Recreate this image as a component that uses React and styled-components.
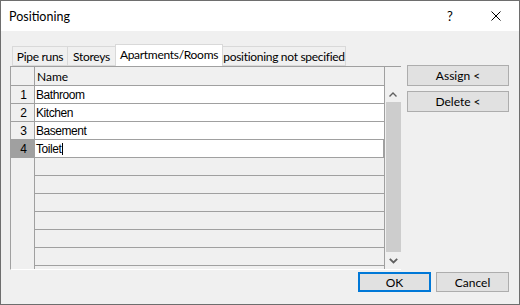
import React from "react";
import styled, { createGlobalStyle } from "styled-components";

const GlobalStyle = createGlobalStyle`
  html, body { margin: 0; padding: 0; background: #ffffff; }
  body { font-family: Lato, "Noto Sans", sans-serif; }
  * { box-sizing: border-box; }
`;

const UI_FONT = `Lato, "Noto Sans", sans-serif`;
const GRID_FONT = `"Liberation Sans", Arial, sans-serif`;
const LINE = "#a0a0a0";

const Dialog = styled.div`
  width: 520px;
  height: 305px;
  border: 1px solid #6e6e6e;
  background: #f0f0f0;
  display: flex;
  flex-direction: column;
  overflow: hidden;
`;

const TitleBar = styled.div`
  height: 30px;
  flex: none;
  background: #ffffff;
  display: flex;
  align-items: center;
  padding-left: 8px;
  font-family: ${UI_FONT};
  font-size: 12.5px;
  color: #000;
`;

const TitleText = styled.div`
  flex: 1;
`;

const TitleButton = styled.div`
  width: 46px;
  height: 30px;
  display: flex;
  align-items: center;
  justify-content: center;
  font-size: 13px;
  color: #000;
`;

const Body = styled.div`
  flex: 1;
  display: flex;
  flex-direction: column;
  padding: 13px 10px 0 9px;
`;

const Main = styled.div`
  display: flex;
  gap: 5px;
  height: 226px;
`;

const LeftPane = styled.div`
  width: 392px;
  display: flex;
  flex-direction: column;
`;

const TabStrip = styled.div`
  height: 22px;
  display: flex;
  align-items: flex-end;
  padding-left: 2px;
`;

const Tab = styled.div`
  position: relative;
  width: ${(p) => p.$w}px;
  height: ${(p) => (p.$active ? 22 : 20)}px;
  margin-left: ${(p) => (p.$first ? 0 : -1)}px;
  border: 1px solid #d9d9d9;
  border-bottom: ${(p) => (p.$active ? "none" : "1px solid #d9d9d9")};
  background: ${(p) => (p.$active ? "#ffffff" : "#f0f0f0")};
  z-index: ${(p) => (p.$active ? 1 : 0)};
  display: flex;
  align-items: center;
  justify-content: center;
  padding-bottom: ${(p) => (p.$active ? 2 : 0)}px;
  font-family: ${UI_FONT};
  font-size: 12px;
  letter-spacing: -0.3px;
  color: #000;
  white-space: nowrap;
  overflow: hidden;
`;

const Grid = styled.div`
  width: 391px;
  height: 204px;
  border-top: 1px solid ${LINE};
  border-left: 1px solid ${LINE};
  border-bottom: 1px solid #ffffff;
  background: #f0f0f0;
  display: flex;
  flex-direction: column;
  font-family: ${GRID_FONT};
  color: #000;
`;

const HeaderRow = styled.div`
  display: flex;
  height: 19px;
  flex: none;
`;

const NumHead = styled.div`
  width: 24px;
  border-right: 1px solid ${LINE};
  border-bottom: 1px solid ${LINE};
`;

const NameHead = styled.div`
  width: 350px;
  border-right: 1px solid ${LINE};
  border-bottom: 1px solid ${LINE};
  display: flex;
  align-items: center;
  padding-left: 2px;
  font-family: ${UI_FONT};
  font-size: 12px;
`;

const Corner = styled.div`
  width: 16px;
`;

const GridBody = styled.div`
  flex: 1;
  display: flex;
  overflow: hidden;
`;

const Rows = styled.div`
  width: 374px;
  display: flex;
  flex-direction: column;
  overflow: hidden;
`;

const Row = styled.div`
  display: flex;
  height: 18px;
  flex: none;
`;

const NumCell = styled.div`
  width: 24px;
  border-right: 1px solid ${LINE};
  border-bottom: ${(p) => (p.$filled ? `1px solid ${LINE}` : "none")};
  background: ${(p) => (p.$current ? "#a0a0a0" : "#f0f0f0")};
  display: flex;
  align-items: center;
  justify-content: flex-end;
  padding-right: 7px;
  font-size: 12px;
`;

const NameCell = styled.div`
  width: 350px;
  border-right: 1px solid ${LINE};
  border-bottom: 1px solid ${LINE};
  background: ${(p) => (p.$filled ? "#ffffff" : "transparent")};
  box-shadow: ${(p) => (p.$editing ? `inset -1px 0 0 ${LINE}` : "none")};
  display: flex;
  align-items: center;
  padding-left: 1px;
  white-space: nowrap;
  font-size: 12px;
  letter-spacing: -0.45px;
`;

const Caret = styled.span`
  display: inline-block;
  width: 1px;
  height: 12px;
  background: #000;
  margin-left: 1px;
`;

const Scrollbar = styled.div`
  width: 16px;
  display: flex;
  flex-direction: column;
  background: #f0f0f0;
`;

const ArrowButton = styled.div`
  height: ${(p) => p.$h}px;
  flex: none;
  display: flex;
  align-items: center;
  justify-content: center;
`;

const Thumb = styled.div`
  flex: 1;
  margin-left: 1px;
  background: #cdcdcd;
`;

const ButtonColumn = styled.div`
  width: 102px;
  display: flex;
  flex-direction: column;
  gap: 5px;
  padding-top: 21px;
`;

const Button = styled.button`
  width: ${(p) => p.$w || 102}px;
  height: ${(p) => p.$h || 21}px;
  padding: 0;
  margin: 0;
  background: #e1e1e1;
  border: ${(p) => (p.$default ? "2px solid #0078d7" : "1px solid #adadad")};
  font-family: ${UI_FONT};
  font-size: 12px;
  color: #000;
  display: flex;
  align-items: center;
  justify-content: center;
`;

const Footer = styled.div`
  display: flex;
  justify-content: flex-end;
  gap: 5px;
  margin-top: 2px;
`;

const rows = ["Bathroom", "Kitchen", "Basement", "Toilet"];
const emptyCount = 7;

export default function App() {
  return (
    <>
      <GlobalStyle />
      <Dialog>
        <TitleBar>
          <TitleText>Positioning</TitleText>
          <TitleButton>?</TitleButton>
          <TitleButton>
            <svg width="10" height="10" viewBox="0 0 10 10">
              <path d="M0.5 0.5 L9.5 9.5 M9.5 0.5 L0.5 9.5" stroke="#000" strokeWidth="1" fill="none" />
            </svg>
          </TitleButton>
        </TitleBar>
        <Body>
          <Main>
            <LeftPane>
              <TabStrip>
                <Tab $w={56} $first>Pipe runs</Tab>
                <Tab $w={49}>Storeys</Tab>
                <Tab $w={108} $active>Apartments/Rooms</Tab>
                <Tab $w={124}>positioning not specified</Tab>
              </TabStrip>
              <Grid>
                <HeaderRow>
                  <NumHead />
                  <NameHead>Name</NameHead>
                  <Corner />
                </HeaderRow>
                <GridBody>
                  <Rows>
                    {rows.map((name, i) => (
                      <Row key={name}>
                        <NumCell $filled $current={i === 3}>{i + 1}</NumCell>
                        <NameCell $filled $editing={i === 3}>
                          {name}
                          {i === 3 && <Caret />}
                        </NameCell>
                      </Row>
                    ))}
                    {Array.from({ length: emptyCount }).map((_, i) => (
                      <Row key={"e" + i}>
                        <NumCell />
                        <NameCell />
                      </Row>
                    ))}
                  </Rows>
                  <Scrollbar>
                    <ArrowButton $h={16}>
                      <svg width="8" height="5" viewBox="0 0 8 5">
                        <path d="M0.5 4.5 L4 1 L7.5 4.5" stroke="#606060" strokeWidth="1.4" fill="none" />
                      </svg>
                    </ArrowButton>
                    <Thumb />
                    <ArrowButton $h={17}>
                      <svg width="9" height="6" viewBox="0 0 9 6">
                        <path d="M0.8 0.8 L4.5 4.5 L8.2 0.8" stroke="#606060" strokeWidth="1.8" fill="none" />
                      </svg>
                    </ArrowButton>
                  </Scrollbar>
                </GridBody>
              </Grid>
            </LeftPane>
            <ButtonColumn>
              <Button>Assign &lt;</Button>
              <Button>Delete &lt;</Button>
            </ButtonColumn>
          </Main>
          <Footer>
            <Button $w={73} $h={20} $default>OK</Button>
            <Button $w={73} $h={20}>Cancel</Button>
          </Footer>
        </Body>
      </Dialog>
    </>
  );
}
